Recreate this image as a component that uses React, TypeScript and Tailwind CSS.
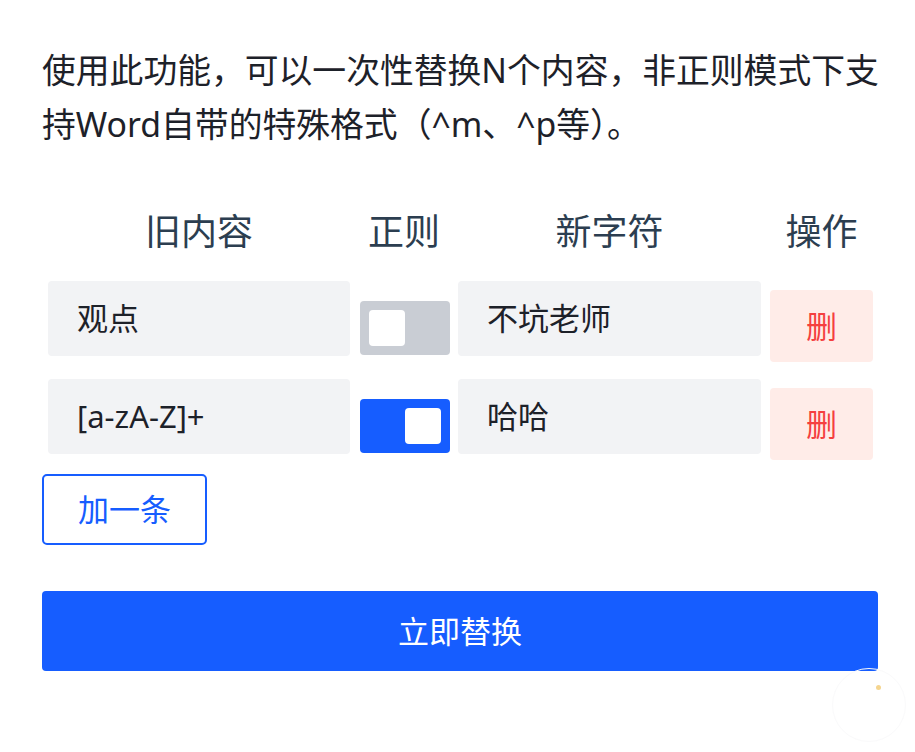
const rows = [
  { from: '观点', regex: false, to: '不坑老师' },
  { from: '[a-zA-Z]+', regex: true, to: '哈哈' },
];

function Switch({ on }: { on: boolean }) {
  return (
    <div
      className={`flex h-[54px] w-[90px] items-center rounded-[4px] px-[9px] ${
        on ? 'justify-end bg-[#165dff]' : 'justify-start bg-[#c9cdd4]'
      }`}
    >
      <div className="h-[36px] w-[36px] rounded-[4px] bg-white" />
    </div>
  );
}

function App() {
  return (
    <div
      className="relative min-h-[752px] bg-white pl-[42px] pr-[37px] pt-[43px] text-[#1d2129]"
      style={{ fontFamily: '"Noto Sans", "Noto Sans CJK SC", sans-serif' }}
    >
      <p className="w-[846px] text-[33.8px] leading-[54px] text-[#1d2129]">
        使用此功能，可以一次性替换N个内容，非正则模式下支持Word自带的特殊格式（^m、^p等）。
      </p>

      <div className="mt-[54px] grid grid-cols-[302px_90px_303px_103px] gap-x-[9px] pl-[6px] text-[#2c3e50]">
        <div className="text-center text-[36px] leading-[54px]">旧内容</div>
        <div className="text-center text-[36px] leading-[54px]">正则</div>
        <div className="text-center text-[36px] leading-[54px]">新字符</div>
        <div className="text-center text-[36px] leading-[54px]">操作</div>
      </div>

      <div className="mt-[22px] flex flex-col gap-[17px] pl-[6px]">
        {rows.map((r) => (
          <div key={r.from} className="grid grid-cols-[302px_90px_303px_103px] items-start gap-x-[9px]">
            <div className="flex h-[75px] items-center rounded-[4px] bg-[#f2f3f5] pl-[29px] text-[31px]">
              {r.from}
            </div>
            <div className="mt-[20px] pl-px">
              <Switch on={r.regex} />
            </div>
            <div className="flex h-[75px] items-center rounded-[4px] bg-[#f2f3f5] pl-[29px] text-[31px]">
              {r.to}
            </div>
            <button className="mt-[9px] flex h-[72px] w-[103px] items-center justify-center rounded-[4px] bg-[#ffece8] text-[31px] text-[#f53f3f]">
              删
            </button>
          </div>
        ))}
      </div>

      <button className="mt-[14px] flex h-[71px] w-[165px] items-center justify-center rounded-[5px] border-2 border-[#165dff] text-[31px] text-[#165dff]">
        加一条
      </button>

      <button className="mt-[46px] flex h-[80px] w-full items-center justify-center rounded-[4px] bg-[#165dff] text-[31px] text-white">
        立即替换
      </button>

      <div className="absolute left-[832px] top-[668px] h-[74px] w-[74px] rounded-full border border-[#fafafb]">
        <div className="absolute left-[43px] top-[16px] h-[5px] w-[5px] rounded-full bg-[#f5d58f]" />
      </div>
    </div>
  );
}

export default App;
